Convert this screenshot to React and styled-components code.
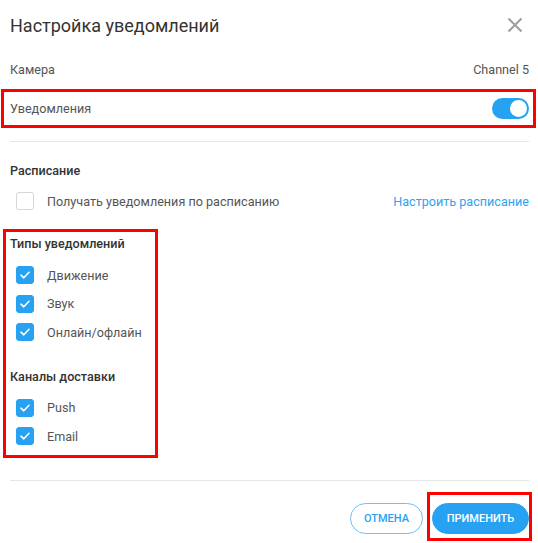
import React from 'react';
import styled, { createGlobalStyle } from 'styled-components';

const GlobalStyle = createGlobalStyle`
  html, body {
    margin: 0;
    padding: 0;
    background: #fff;
  }
  body {
    font-family: Roboto, "Noto Sans", sans-serif;
    color: #555;
  }
`;

const BLUE = '#27a2f3';

const Dialog = styled.div`
  width: 538px;
  height: 543px;
  box-sizing: border-box;
  padding: 0 9px 0 10px;
  display: flex;
  flex-direction: column;
  overflow: hidden;
`;

const Header = styled.div`
  height: 50px;
  display: flex;
  align-items: center;
  justify-content: space-between;
`;

const Title = styled.h1`
  margin: 0;
  font-size: 18px;
  font-weight: 400;
  color: #333;
`;

const Close = styled.button`
  border: 0;
  background: none;
  padding: 0;
  margin-right: 6px;
  width: 16px;
  height: 16px;
  display: flex;
  cursor: pointer;
`;

const Row = styled.div`
  height: ${p => p.$h || 28}px;
  display: flex;
  align-items: center;
  justify-content: space-between;
  font-size: 12.6px;
  color: #555;
`;

const Highlight = styled.div`
  border: 3px solid #ff0000;
  box-sizing: border-box;
`;

const NotifyBox = styled(Highlight)`
  margin: 0 -7px 0 -9px;
  padding: 0 4px 0 6px;
`;

const TypesBox = styled(Highlight)`
  width: 155px;
  margin: 11px 0 0 -7px;
  padding: 0 0 4px 4px;
`;

const ApplyBox = styled(Highlight)`
  padding: 8px 0 4px 2px;
  display: flex;
`;

const Divider = styled.hr`
  margin: ${p => p.$top}px 0 0;
  border: 0;
  border-top: 1px solid #e6e6e6;
`;

const SectionTitle = styled.div`
  height: ${p => p.$h || 22}px;
  margin-top: ${p => p.$top || 0}px;
  display: flex;
  align-items: center;
  font-size: 12.6px;
  font-weight: 500;
  color: #333;
`;

const CheckItem = styled.label`
  height: ${p => p.$h || 28.5}px;
  display: flex;
  align-items: center;
  gap: 13px;
  padding-left: 6px;
  font-size: 12.6px;
  color: #555;
  cursor: pointer;
`;

const Spacer = styled.div`
  height: ${p => p.$h}px;
`;

const Box = styled.span`
  width: 18px;
  height: 18px;
  box-sizing: border-box;
  border-radius: 3px;
  display: flex;
  align-items: center;
  justify-content: center;
  background: ${p => (p.$on ? BLUE : '#fff')};
  border: 1px solid ${p => (p.$on ? BLUE : '#d6d6d6')};
`;

const Link = styled.a`
  color: #2ea3f2;
  text-decoration: none;
  font-size: 12.6px;
`;

const Toggle = styled.span`
  width: 37px;
  height: 21px;
  border-radius: 11px;
  background: ${BLUE};
  position: relative;

  &::after {
    content: '';
    position: absolute;
    right: 2px;
    top: 2px;
    width: 17px;
    height: 17px;
    border-radius: 50%;
    background: #fff;
  }
`;

const Footer = styled.div`
  margin-top: 11px;
  display: flex;
  justify-content: flex-end;
  align-items: flex-start;
  gap: 4px;
  margin-right: -3px;
`;

const Button = styled.button`
  height: 31px;
  border-radius: 16px;
  font-family: Roboto, sans-serif;
  font-size: 11px;
  font-weight: 500;
  text-transform: uppercase;
  cursor: pointer;
  border: 1px solid ${BLUE};
  padding: 0;
  width: ${p => p.$w}px;
  background: ${p => (p.$primary ? BLUE : '#fff')};
  color: ${p => (p.$primary ? '#fff' : BLUE)};
  ${p => !p.$primary && 'border-color: #6fc0f6;'}
`;

const CancelWrap = styled.div`
  padding-top: 11px;
`;

const Check = ({ on }) => (
  <Box $on={on}>
    {on && (
      <svg width="10" height="8" viewBox="0 0 10 8" fill="none">
        <path d="M1 4.2 L3.8 6.8 L9 1.3" stroke="#fff" strokeWidth="1.6" strokeLinecap="round" strokeLinejoin="round" />
      </svg>
    )}
  </Box>
);

const types = ['Движение', 'Звук', 'Онлайн/офлайн'];
const channels = ['Push', 'Email'];

export default function App() {
  return (
    <>
      <GlobalStyle />
      <Dialog>
        <Header>
          <Title>Настройка уведомлений</Title>
          <Close aria-label="close">
            <svg width="16" height="16" viewBox="0 0 16 16">
              <path d="M1.5 1.5 L14.5 14.5 M14.5 1.5 L1.5 14.5" stroke="#9e9e9e" strokeWidth="2" />
            </svg>
          </Close>
        </Header>

        <Row $h={39}>
          <span>Камера</span>
          <span>Channel 5</span>
        </Row>

        <NotifyBox>
          <Row $h={33}>
            <span>Уведомления</span>
            <Toggle />
          </Row>
        </NotifyBox>

        <Divider $top={13} />

        <SectionTitle $h={28} $top={14}>Расписание</SectionTitle>
        <Row $h={34}>
          <CheckItem $h={34}>
            <Check on={false} />
            Получать уведомления по расписанию
          </CheckItem>
          <Link href="#">Настроить расписание</Link>
        </Row>

        <TypesBox>
          <SectionTitle>Типы уведомлений</SectionTitle>
          <Spacer $h={7} />
          {types.map(t => (
            <CheckItem key={t}>
              <Check on />
              {t}
            </CheckItem>
          ))}
          <SectionTitle $top={19}>Каналы доставки</SectionTitle>
          <Spacer $h={6} />
          {channels.map(t => (
            <CheckItem key={t}>
              <Check on />
              {t}
            </CheckItem>
          ))}
        </TypesBox>

        <Divider $top={22} />

        <Footer>
          <CancelWrap>
            <Button $w={73}>Отмена</Button>
          </CancelWrap>
          <ApplyBox>
            <Button $primary $w={97}>Применить</Button>
          </ApplyBox>
        </Footer>
      </Dialog>
    </>
  );
}
